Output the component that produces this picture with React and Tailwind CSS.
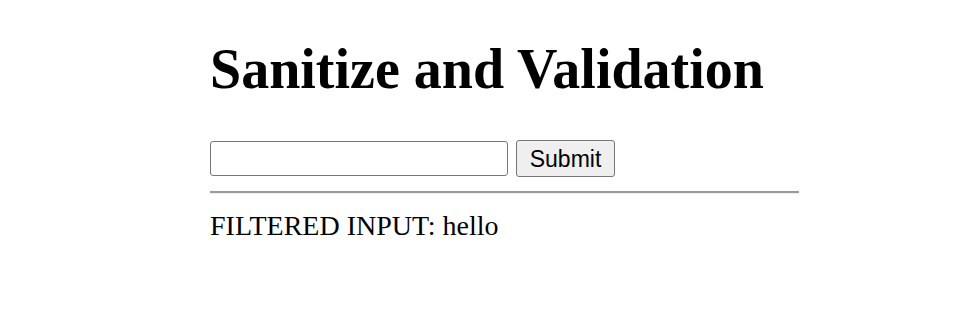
export default function App() {
  return (
    <div className="min-h-screen bg-white text-black">
      <div className="ml-[210px] w-[589px] pt-[37px] font-['Liberation_Serif',serif]">
        <h1 className="text-[56px] font-bold leading-[64px] my-0">Sanitize and Validation</h1>
        <form className="mt-[39px] flex items-center gap-[8px]">
          <input
            type="text"
            className="w-[298px] h-[35px] border border-[#767676] rounded-[3px] bg-white px-[3px] font-['Liberation_Sans',sans-serif] text-[23px]"
          />
          <button
            type="button"
            className="w-[99px] h-[37px] border border-[#767676] rounded-[3px] bg-[#efefef] font-['Liberation_Sans',sans-serif] text-[23px] leading-[26px] text-black"
          >
            Submit
          </button>
        </form>
        <div className="mt-[14px] border-t-2 border-t-[#9a9a9a] border-b border-b-[#eeeeee]" />
        <p className="mt-[16px] text-[28px] leading-[32px]">FILTERED INPUT: hello</p>
      </div>
    </div>
  );
}
